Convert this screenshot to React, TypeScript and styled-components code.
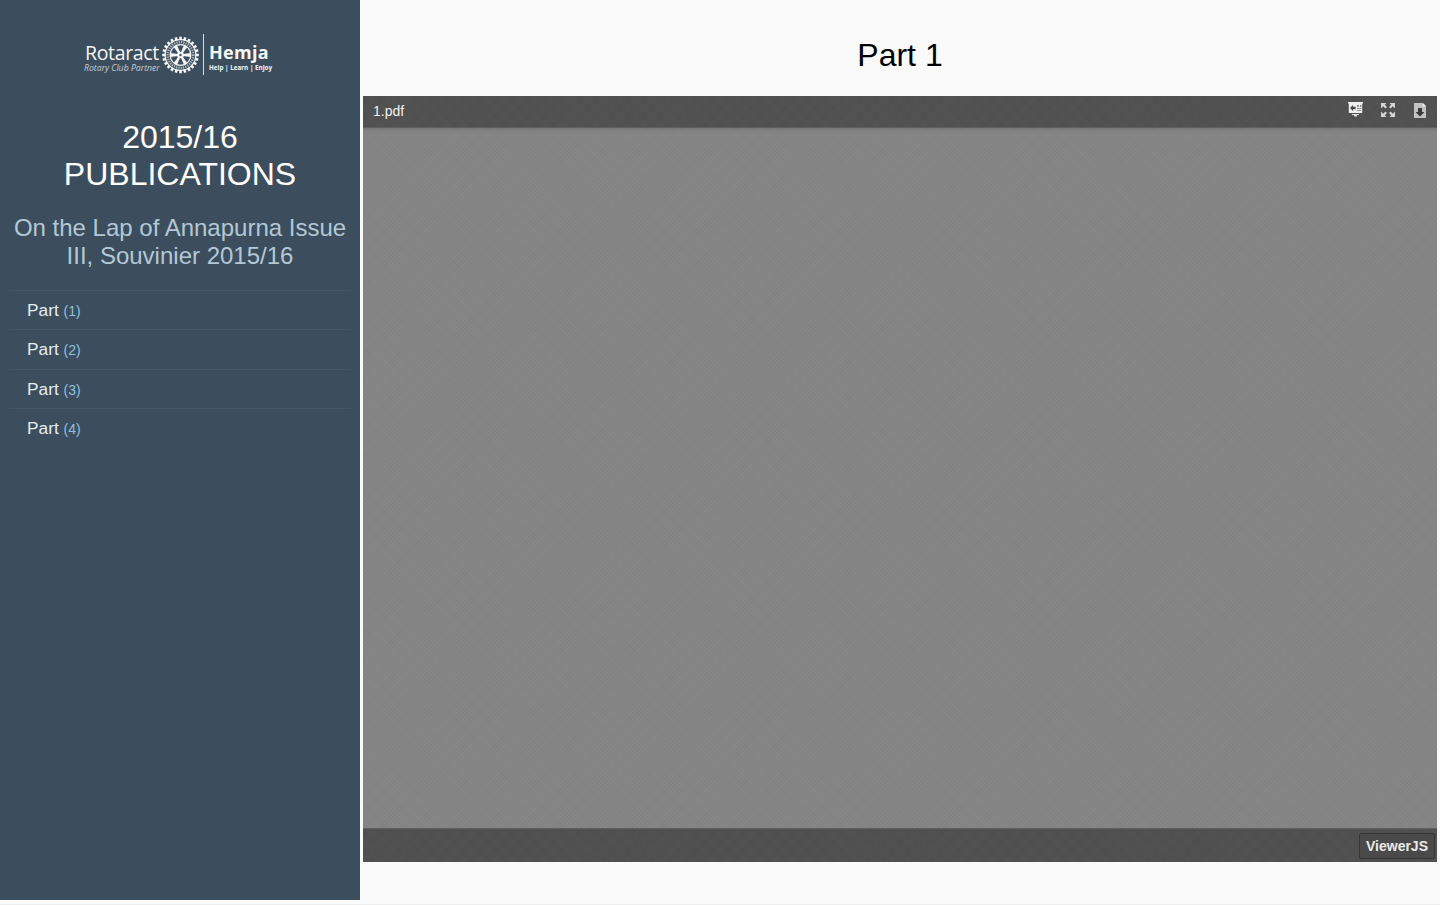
import React from "react";
import styled, { createGlobalStyle } from "styled-components";

const Global = createGlobalStyle`
  html, body { margin: 0; padding: 0; background: #fafafa; }
  body { font-family: "Liberation Sans", Arial, sans-serif; }
`;

const Page = styled.div`
  display: flex;
  align-items: flex-start;
  width: 1440px;
  height: 905px;
  overflow: hidden;
  background: #fafafa;
  box-sizing: border-box;
  border-bottom: 1px solid #eeeeee;
`;

const Sidebar = styled.aside`
  flex: none;
  width: 360px;
  height: 900px;
  background: #3c4e5d;
  box-sizing: border-box;
  padding: 34px 9px 0;
  text-align: center;
`;

const Logo = styled.div`
  display: flex;
  justify-content: center;
  align-items: center;
  height: 41px;
  padding-right: 4px;
  color: #f4f6f7;
  font-family: "Open Sans", sans-serif;
`;

const LogoLeft = styled.div`
  display: flex;
  flex-direction: column;
  align-items: flex-start;
  width: 76px;
  margin-top: 6px;
`;

const LogoName = styled.span`
  font-size: 19.5px;
  line-height: 21px;
  letter-spacing: -0.35px;
  padding-left: 1px;
  font-weight: 400;
`;

const LogoTag = styled.span`
  font-size: 8.7px;
  line-height: 10px;
  font-style: italic;
  color: #c6ccd2;
  white-space: nowrap;
`;

const LogoWheel = styled.svg`
  display: block;
  flex: none;
  width: 37px;
  height: 38px;
  margin-left: 2px;
`;

const LogoDivider = styled.div`
  flex: none;
  width: 1px;
  height: 41px;
  margin: 0 5px 0 4px;
  background: #d5dade;
`;

const LogoRight = styled.div`
  display: flex;
  flex-direction: column;
  align-items: flex-start;
  width: 63px;
  margin-top: 5px;
`;

const LogoHemja = styled.span`
  font-size: 18px;
  line-height: 22px;
  font-weight: 700;
  letter-spacing: 0.3px;
`;

const LogoMotto = styled.span`
  font-size: 6.3px;
  line-height: 10px;
  font-weight: 700;
  white-space: nowrap;
`;

const Title = styled.h1`
  margin: 44px 0 0;
  font-size: 32px;
  line-height: 37px;
  font-weight: 400;
  color: #ffffff;
`;

const Subtitle = styled.h2`
  margin: 21px 0 0;
  font-size: 24px;
  line-height: 28px;
  font-weight: 400;
  color: #b3c8d7;
`;

const Menu = styled.ul`
  list-style: none;
  margin: 20px 0 0;
  padding: 0;
  text-align: left;
`;

const Item = styled.li`
  height: 39.33px;
  box-sizing: border-box;
  border-top: 1px solid #455766;
  padding-left: 18px;
  font-size: 17.3px;
  line-height: 38px;
  color: #e2edf4;
`;

const Count = styled.span`
  font-size: 14px;
  color: #8fbfe0;
`;

const Main = styled.main`
  flex: none;
  width: 1080px;
  box-sizing: border-box;
  padding: 0 3px;
`;

const Heading = styled.h3`
  margin: 0;
  height: 96px;
  box-sizing: border-box;
  padding-top: 37px;
  text-align: center;
  font-size: 32px;
  line-height: 37px;
  font-weight: 400;
  color: #000000;
`;

const Viewer = styled.div`
  display: flex;
  flex-direction: column;
  height: 766px;
`;

const barTexture = `
  repeating-linear-gradient(45deg, rgba(255,255,255,0.012) 0 1px, rgba(0,0,0,0.012) 1px 2px),
  repeating-linear-gradient(-45deg, rgba(255,255,255,0.01) 0 1px, rgba(0,0,0,0.01) 1px 2px)
`;

const TopBar = styled.header`
  flex: none;
  display: flex;
  align-items: center;
  justify-content: space-between;
  height: 32px;
  box-sizing: border-box;
  padding: 0 10px 2px;
  background: ${barTexture}, #505050;
  box-shadow: inset 0 -1px 0 #5e5e5e;
`;

const FileName = styled.span`
  font-size: 14px;
  color: #f0f0f0;
`;

const Tools = styled.div`
  display: flex;
  align-items: center;
  gap: 16px;
  margin-right: -1px;
  margin-top: -2px;
`;

const ToolIcon = styled.svg`
  display: block;
  width: 16px;
  height: 18px;
`;

const Canvas = styled.div`
  flex: 1;
  background:
    repeating-linear-gradient(45deg, rgba(255,255,255,0.012) 0 1px, rgba(0,0,0,0.012) 1px 3px),
    repeating-linear-gradient(-45deg, rgba(255,255,255,0.01) 0 1px, rgba(0,0,0,0.01) 1px 3px),
    #868686;
  box-shadow: inset 0 4px 4px -3px rgba(70,70,70,0.3);
`;

const BottomBar = styled.footer`
  flex: none;
  display: flex;
  align-items: center;
  justify-content: flex-end;
  height: 34px;
  box-sizing: border-box;
  padding: 2px 2px 0 0;
  background: ${barTexture}, #4f4f4f;
  box-shadow: inset 0 1px 0 #5f5f5f;
`;

const Badge = styled.a`
  display: block;
  height: 26px;
  box-sizing: border-box;
  padding: 0 6px;
  border: 1px solid #363636;
  border-radius: 2px;
  background: #4a4a4a;
  font-size: 14px;
  font-weight: 700;
  line-height: 25px;
  color: #ebebeb;
`;

const Wheel = () => (
  <LogoWheel viewBox="-19 -19 38 38" fill="none" stroke="#f4f6f7">
    <circle r="15.8" strokeWidth="1.3" />
    <circle r="10.6" strokeWidth="1.2" />
    <circle r="13.2" strokeWidth="2.4" strokeDasharray="1.2 1.2" opacity="0.7" />
    {Array.from({ length: 24 }, (_, i) => (
      <rect key={i} x="-1.3" y="-18.8" width="2.6" height="3.4" fill="#f4f6f7" stroke="none" transform={`rotate(${i * 15})`} />
    ))}
    {Array.from({ length: 6 }, (_, i) => (
      <path key={i} d="M-1 -2.5 L-2 -10.5 L2 -10.5 L1 -2.5 Z" fill="#f4f6f7" stroke="none" transform={`rotate(${i * 60 + 30})`} />
    ))}
    <circle r="3.4" fill="#f4f6f7" stroke="none" />
    <circle r="1.2" fill="#3c4e5d" stroke="none" />
  </LogoWheel>
);

const links = [1, 2, 3, 4];

export default function App() {
  return (
    <Page>
      <Global />
      <Sidebar>
        <Logo>
          <LogoLeft>
            <LogoName>Rotaract</LogoName>
            <LogoTag>Rotary Club Partner</LogoTag>
          </LogoLeft>
          <Wheel />
          <LogoDivider />
          <LogoRight>
            <LogoHemja>Hemja</LogoHemja>
            <LogoMotto>Help | Learn | Enjoy</LogoMotto>
          </LogoRight>
        </Logo>
        <Title>2015/16<br />PUBLICATIONS</Title>
        <Subtitle>On the Lap of Annapurna Issue III, Souvinier 2015/16</Subtitle>
        <Menu>
          {links.map((n) => (
            <Item key={n}>Part <Count>({n})</Count></Item>
          ))}
        </Menu>
      </Sidebar>
      <Main>
        <Heading>Part 1</Heading>
        <Viewer>
          <TopBar>
            <FileName>1.pdf</FileName>
            <Tools>
              <ToolIcon viewBox="0 0 16 18">
                <path fill="#eeeeee" d="M0 1h15v1.4h-.8v9.6H.8V2.4H0z" />
                <path fill="#444444" d="M2 7l3-3v1.8h2.6v2.4H5V10z" />
                <path fill="#8f8f8f" d="M9 4h2v2H9zM12 4h1.5v2H12zM9 7h4.5v1H9zM9 9h4v1H9z" />
                <path fill="#dddddd" d="M4 13h7v1H9v1.5H6V14H4z" />
              </ToolIcon>
              <ToolIcon viewBox="0 0 16 18">
                <path fill="#d4d4d4" d="M1 2h5.5L4.8 3.7 7 5.9 5.4 7.5 3.2 5.3 1 7.5zM15 2H9.5l1.7 1.7L9 5.9l1.6 1.6 2.2-2.2L15 7.5zM1 16h5.5l-1.7-1.7L7 12.1l-1.6-1.6-2.2 2.2L1 10.5zM15 16H9.5l1.7-1.7L9 12.1l1.6-1.6 2.2 2.2 2.2-2.2z" />
              </ToolIcon>
              <ToolIcon viewBox="0 0 16 18">
                <path fill="#c2c2c2" d="M2 2h8l4 4v11H2z" />
                <path fill="#eeeeee" d="M10.6 1.5l3.9 3.9h-3.9z" />
                <path fill="#3a3a3a" d="M6 7h4v4h2.5L8 15.5 3.5 11H6z" />
              </ToolIcon>
            </Tools>
          </TopBar>
          <Canvas />
          <BottomBar>
            <Badge>ViewerJS</Badge>
          </BottomBar>
        </Viewer>
      </Main>
    </Page>
  );
}
